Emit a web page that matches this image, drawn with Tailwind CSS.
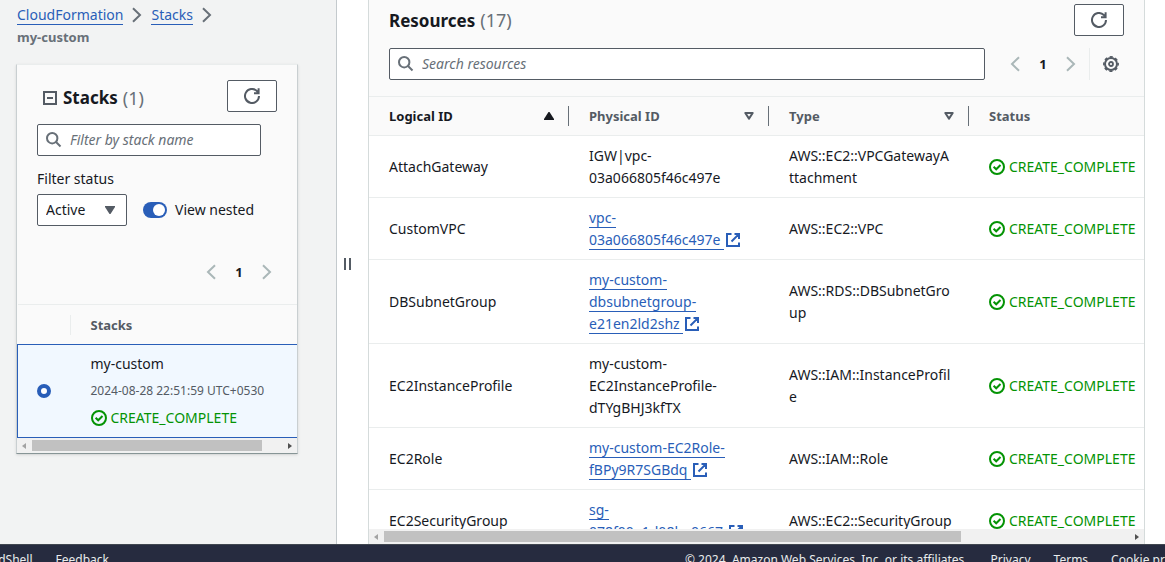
<!DOCTYPE html>
<html lang="en">
<head>
<meta charset="utf-8">
<title>CloudFormation - Stack my-custom</title>
<script src="https://cdn.jsdelivr.net/npm/@tailwindcss/browser@4"></script>
</head>
<body class="font-['Noto_Sans',sans-serif] text-[14px] leading-[22px] text-[#16191f] bg-white">
<svg class="hidden" aria-hidden="true">
  <symbol id="refresh" viewBox="0 0 16 16"><path d="M15 8a7 7 0 1 1-2.2-5.1L14 4.2M14.6 .2v5H10" fill="none" stroke="currentColor" stroke-width="2"/></symbol>
  <symbol id="search" viewBox="0 0 16 16"><circle cx="6.2" cy="6.2" r="5.2" fill="none" stroke="currentColor" stroke-width="2"/><path d="M10 10l4.500 4.500" stroke="currentColor" stroke-width="2"/></symbol>
  <symbol id="left" viewBox="0 0 16 16"><path d="M12 1.2L5 8l7 6.800" fill="none" stroke="currentColor" stroke-width="2"/></symbol>
  <symbol id="right" viewBox="0 0 16 16"><path d="M4 1.200L11 8l-7 6.800" fill="none" stroke="currentColor" stroke-width="2"/></symbol>
  <symbol id="ok" viewBox="0 0 16 16"><circle cx="8" cy="8" r="7" fill="none" stroke="currentColor" stroke-width="2"/><path d="M4.600 7.800l2.600 2.500 4.300-4.300" fill="none" stroke="currentColor" stroke-width="2"/></symbol>
  <symbol id="ext" viewBox="0 0 16 16"><path d="M6.500 2H2v12h12V10.500M9.500 2H14v5M13.600 2.400L6.500 9.500" fill="none" stroke="currentColor" stroke-width="2"/></symbol>
  <symbol id="sort" viewBox="0 0 10 8"><path d="M1.300 1h7.400L5 6.600z" fill="none" stroke="currentColor" stroke-width="2" stroke-linejoin="round"/></symbol>
  <symbol id="gear" viewBox="0 0 16 16"><g fill="none" stroke="currentColor"><circle cx="8" cy="8" r="6" stroke-width="2"/><circle cx="8" cy="8" r="7.200" stroke-width="1.500" stroke-dasharray="3.150 2.505" stroke-dashoffset="1.575"/><circle cx="8" cy="8" r="2" stroke-width="1.800"/></g></symbol>
</svg>
<div class="h-screen flex flex-col overflow-hidden">
  <div class="flex-1 min-h-0 flex">
    <aside class="w-[337px] shrink-0 bg-[#f2f3f3] border-r border-[#c4cacd] pl-4 pr-[38px] pt-[5px]">
      <nav aria-label="Breadcrumbs" class="flex flex-wrap items-center gap-y-px text-[#687078]">
        <a href="#" class="ml-px text-[#295eb8] border-b border-[#295eb8] leading-[19px]">CloudFormation</a>
        <svg class="size-4 mx-[6px]"><use href="#right"/></svg>
        <a href="#" class="text-[#295eb8] border-b border-[#295eb8] leading-[19px]">Stacks</a>
        <svg class="size-4 mx-[6px]"><use href="#right"/></svg>
        <span class="w-full ml-px text-[13px] font-bold">my-custom</span>
      </nav>
      <section class="mt-4 bg-[#fafafa] border border-[#c9cfd1] border-t-[#eaeded] border-b-[#879596] shadow-sm">
        <div class="px-5 pt-[15px]">
          <div class="flex items-center justify-between">
            <h2 class="flex items-center pl-[6px] pt-1 text-[17px] font-bold">
              <button aria-label="Collapse" class="size-[14px] mr-[6px] border-2 border-[#545b64] flex items-center justify-center"><span class="w-[6px] h-[2px] bg-[#545b64]"></span></button>
              Stacks<span class="ml-[5px] text-[18px] font-normal text-[#687078]">(1)</span>
            </h2>
            <button aria-label="Refresh stacks" class="w-[50px] h-8 bg-white border border-[#545b64] rounded-xs flex items-center justify-center text-[#545b64]"><svg class="size-4"><use href="#refresh"/></svg></button>
          </div>
          <label class="mt-3 w-56 h-8 bg-white border border-[#545b64] rounded-xs flex items-center px-2 text-[#687078]">
            <svg class="size-4 shrink-0"><use href="#search"/></svg>
            <input type="search" aria-label="Filter by stack name" placeholder="Filter by stack name" class="ml-2 min-w-0 flex-1 outline-none placeholder:italic placeholder:text-[#687078]">
          </label>
          <label for="status" class="block mt-3">Filter status</label>
          <div class="mt-1 flex items-center">
            <div class="grid w-[90px] h-8">
              <select id="status" class="col-start-1 row-start-1 appearance-none bg-white border border-[#545b64] rounded-xs pl-2"><option>Active</option></select>
              <svg class="col-start-1 row-start-1 self-center justify-self-end mr-3 w-[10px] h-2 text-[#545b64] pointer-events-none" viewBox="0 0 10 8"><path d="M0 0h10v1L5.500 8h-1L0 1z" fill="currentColor"/></svg>
            </div>
            <label class="ml-4 flex items-center"><input type="checkbox" checked class="appearance-none w-6 h-4 rounded-full bg-[#295eb8] mr-2 pl-[10px] pt-[2px] before:block before:size-3 before:rounded-full before:bg-white">View nested</label>
          </div>
          <div class="mt-[30px] h-8 pr-[2px] flex items-center justify-end text-[#aab7b8]">
            <button aria-label="Previous page"><svg class="size-4"><use href="#left"/></svg></button>
            <button class="w-10 text-[13px] font-bold text-[#16191f]">1</button>
            <button aria-label="Next page"><svg class="size-4"><use href="#right"/></svg></button>
          </div>
        </div>
        <table class="mt-4 w-full border-t border-[#eaeded]">
          <thead><tr class="h-10">
            <th aria-label="Select" class="w-[53px] p-0"><div class="h-5 border-r border-[#eaeded]"></div></th>
            <th class="p-0 pl-5 text-left text-[13px] text-[#545b64]">Stacks</th>
          </tr></thead>
          <tbody><tr class="bg-[#f1f8ff] h-[93px]">
            <td class="p-0 pl-[19px] border-y border-l border-[#295eb8]"><input type="radio" checked aria-label="my-custom" class="block appearance-none size-[14px] rounded-full border-4 border-[#295eb8] bg-white"></td>
            <td class="p-0 pl-5 border-y border-[#295eb8]">
              <div>my-custom</div>
              <div class="my-[5px] text-[12px] text-[#545b64] whitespace-nowrap">2024-08-28 22:51:59 UTC+0530</div>
              <div class="flex items-center gap-1 text-[#049304]"><svg class="size-4"><use href="#ok"/></svg>CREATE_COMPLETE</div>
            </td>
          </tr></tbody>
        </table>
        <div class="h-[15px] bg-[#f1f1f1] flex items-center px-[5px]">
          <svg class="w-1 h-[6px] text-[#a3a3a3]" viewBox="0 0 4 6"><path d="M4 0v6L0 3z" fill="currentColor"/></svg>
          <div class="ml-[6px] w-[230px] h-[11px] bg-[#c1c1c1]"></div>
          <svg class="ml-auto w-1 h-[6px] text-[#505050]" viewBox="0 0 4 6"><path d="M0 0v6l4-3z" fill="currentColor"/></svg>
        </div>
      </section>
    </aside>
    <button aria-label="Resize panels" class="w-[31px] shrink-0 flex items-center pl-[7px] pb-[16px] gap-[3px]">
      <span class="w-[2px] h-3 bg-[#545b64]"></span><span class="w-[2px] h-3 bg-[#545b64]"></span>
    </button>
    <main class="flex-1 min-w-0 mr-5 border-x border-[#d5dbdb] flex flex-col">
      <div class="bg-[#fafafa] px-5 pt-1 pb-4 border-b border-[#eaeded]">
        <div class="flex items-center justify-between">
          <h2 class="text-[17px] font-bold">Resources<span class="ml-[5px] text-[18px] font-normal text-[#687078]">(17)</span></h2>
          <button aria-label="Refresh resources" class="w-[50px] h-8 bg-white border border-[#545b64] rounded-xs flex items-center justify-center text-[#545b64]"><svg class="size-4"><use href="#refresh"/></svg></button>
        </div>
        <div class="mt-3 flex items-center text-[#aab7b8]">
          <label class="flex-1 h-8 bg-white border border-[#545b64] rounded-xs flex items-center px-2 text-[#687078]">
            <svg class="size-4 shrink-0"><use href="#search"/></svg>
            <input type="search" aria-label="Search resources" placeholder="Search resources" class="ml-2 min-w-0 flex-1 outline-none placeholder:italic placeholder:text-[#687078]">
          </label>
          <button aria-label="Previous page" class="ml-[22px]"><svg class="size-4"><use href="#left"/></svg></button>
          <button class="w-10 text-[13px] font-bold text-[#16191f]">1</button>
          <button aria-label="Next page"><svg class="size-4"><use href="#right"/></svg></button>
          <div class="ml-[10px] h-8 border-l border-[#eaeded] pl-[13px] pr-[5px] flex items-center"><button aria-label="Preferences" class="text-[#545b64]"><svg class="size-4"><use href="#gear"/></svg></button></div>
        </div>
      </div>
      <div class="flex-1 min-h-0 overflow-hidden">
        <table class="w-full table-fixed">
          <thead class="bg-[#fafafa] text-left text-[13px] text-[#545b64]"><tr class="h-[38px] border-b border-[#eaeded]">
            <th class="w-[200px] p-0 text-[#16191f]"><div class="h-5 pl-5 pr-[14px] flex items-center justify-between border-r border-[#687078]">Logical ID<svg class="w-[10px] h-2" viewBox="0 0 10 8"><path d="M4.500 0h1L10 7v1H0V7z" fill="currentColor"/></svg></div></th>
            <th class="w-[200px] p-0"><div class="h-5 pl-5 pr-[14px] flex items-center justify-between border-r border-[#687078]">Physical ID<svg class="w-[10px] h-2"><use href="#sort"/></svg></div></th>
            <th class="w-[200px] p-0"><div class="h-5 pl-5 pr-[14px] flex items-center justify-between border-r border-[#687078]">Type<svg class="w-[10px] h-2"><use href="#sort"/></svg></div></th>
            <th class="p-0 pl-5">Status</th>
          </tr></thead>
          <tbody class="[&_tr]:border-b [&_tr]:border-[#eaeded] [&_td]:pl-5 [&_td]:pt-[9px] [&_td]:pb-2 [&_td]:whitespace-nowrap [&_a]:text-[#295eb8] [&_a]:border-b [&_a]:border-[#295eb8] [&_a+svg]:inline [&_a+svg]:size-4 [&_a+svg]:ml-px [&_a+svg]:text-[#295eb8] [&_a+svg]:align-[-3px] [&_td>div]:flex [&_td>div]:items-center [&_td>div]:gap-1 [&_td>div]:text-[#049304] [&_td>div>svg]:size-4">
            <tr><td>AttachGateway</td><td>IGW|vpc-<br>03a066805f46c497e</td><td>AWS::EC2::VPCGatewayA<br>ttachment</td><td><div><svg><use href="#ok"/></svg>CREATE_COMPLETE</div></td></tr>
            <tr><td>CustomVPC</td><td><a href="#">vpc-<br>03a066805f46c497e&nbsp;</a><svg><use href="#ext"/></svg></td><td>AWS::EC2::VPC</td><td><div><svg><use href="#ok"/></svg>CREATE_COMPLETE</div></td></tr>
            <tr><td>DBSubnetGroup</td><td><a href="#">my-custom-<br>dbsubnetgroup-<br>e21en2ld2shz&nbsp;</a><svg><use href="#ext"/></svg></td><td>AWS::RDS::DBSubnetGro<br>up</td><td><div><svg><use href="#ok"/></svg>CREATE_COMPLETE</div></td></tr>
            <tr><td>EC2InstanceProfile</td><td>my-custom-<br>EC2InstanceProfile-<br>dTYgBHJ3kfTX</td><td>AWS::IAM::InstanceProfil<br>e</td><td><div><svg><use href="#ok"/></svg>CREATE_COMPLETE</div></td></tr>
            <tr><td>EC2Role</td><td><a href="#">my-custom-EC2Role-<br>fBPy9R7SGBdq&nbsp;</a><svg><use href="#ext"/></svg></td><td>AWS::IAM::Role</td><td><div><svg><use href="#ok"/></svg>CREATE_COMPLETE</div></td></tr>
            <tr><td>EC2SecurityGroup</td><td><a href="#">sg-<br>078f00e1d08be0667&nbsp;</a><svg><use href="#ext"/></svg></td><td>AWS::EC2::SecurityGroup</td><td><div><svg><use href="#ok"/></svg>CREATE_COMPLETE</div></td></tr>
          </tbody>
        </table>
      </div>
      <div class="h-[15px] bg-[#f1f1f1] flex items-center px-[5px]">
        <svg class="w-1 h-[6px] text-[#a3a3a3]" viewBox="0 0 4 6"><path d="M4 0v6L0 3z" fill="currentColor"/></svg>
        <div class="ml-[6px] w-[577px] h-[11px] bg-[#c1c1c1]"></div>
        <svg class="ml-auto w-1 h-[6px] text-[#505050]" viewBox="0 0 4 6"><path d="M0 0v6l4-3z" fill="currentColor"/></svg>
      </div>
    </main>
  </div>
  <footer class="h-[18px] shrink-0 overflow-hidden bg-[#262b3f] border-t border-[#414750] text-[#eaeded] text-[12px] whitespace-nowrap">
    <div class="flex items-start justify-between pt-1">
      <div class="w-[109px] flex justify-end gap-[23px]"><a href="#">CloudShell</a><a href="#">Feedback</a></div>
      <div class="w-[480px] flex gap-[23px]"><span>© 2024, Amazon Web Services, Inc. or its affiliates.</span><a href="#">Privacy</a><a href="#">Terms</a><a href="#">Cookie preferences</a></div>
    </div>
  </footer>
</div>
</body>
</html>
